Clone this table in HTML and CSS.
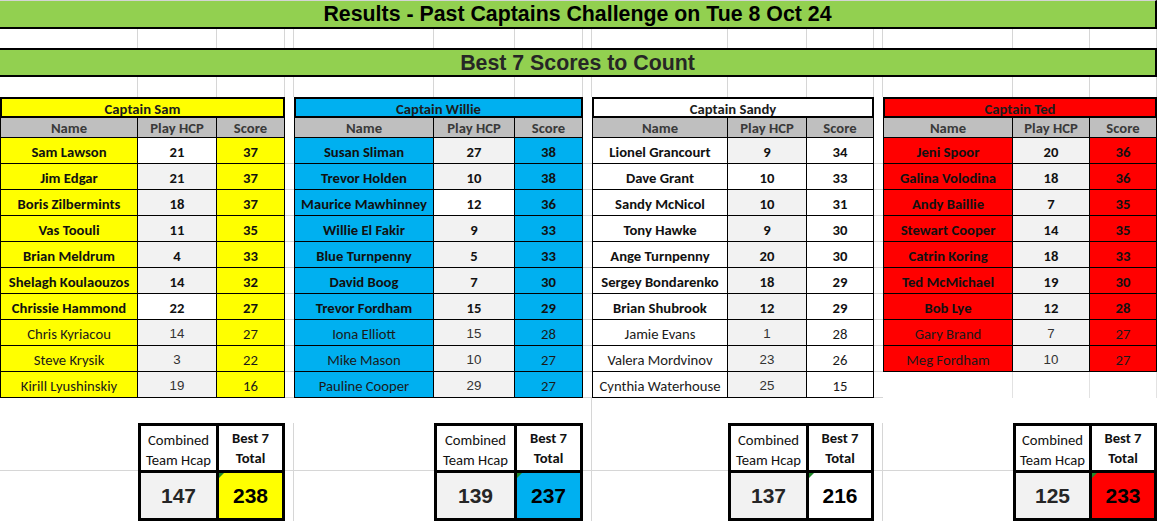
FILE: index.html
```html
<!DOCTYPE html>
<html lang="en">
<head>
<meta charset="utf-8">
<title>Results - Past Captains Challenge on Tue 8 Oct 24</title>
<link rel="stylesheet" href="styles.css">
</head>
<body>
<main class="sheet">
  <h1 class="banner banner--title">Results - Past Captains Challenge on Tue 8 Oct 24</h1>
  <span class="g"></span><span class="g"></span><span class="g"></span><span class="g"></span><span class="g"></span><span class="g"></span><span class="g"></span><span class="g"></span><span class="g"></span><span class="g"></span><span class="g"></span><span class="g"></span><span class="g"></span><span class="g"></span><span class="g"></span>
  <h2 class="banner banner--sub">Best 7 Scores to Count</h2>
  <span class="g"></span><span class="g"></span><span class="g"></span><span class="g"></span><span class="g"></span><span class="g"></span><span class="g"></span><span class="g"></span><span class="g"></span><span class="g"></span><span class="g"></span><span class="g"></span><span class="g"></span><span class="g"></span><span class="g"></span>

  <section class="team team--sam">
    <h3 class="team__captain">Captain Sam</h3>
    <div class="r r--head"><span class="n">Name</span><span class="h">Play HCP</span><span class="s">Score</span></div>
    <div class="r"><span class="n">Sam Lawson</span><span class="h h--w">21</span><span class="s">37</span></div>
    <div class="r"><span class="n">Jim Edgar</span><span class="h">21</span><span class="s">37</span></div>
    <div class="r"><span class="n">Boris Zilbermints</span><span class="h">18</span><span class="s">37</span></div>
    <div class="r"><span class="n">Vas Toouli</span><span class="h">11</span><span class="s">35</span></div>
    <div class="r"><span class="n">Brian Meldrum</span><span class="h">4</span><span class="s">33</span></div>
    <div class="r"><span class="n">Shelagh Koulaouzos</span><span class="h">14</span><span class="s">32</span></div>
    <div class="r"><span class="n">Chrissie Hammond</span><span class="h h--w">22</span><span class="s">27</span></div>
    <div class="r r--extra"><span class="n">Chris Kyriacou</span><span class="h">14</span><span class="s">27</span></div>
    <div class="r r--extra"><span class="n">Steve Krysik</span><span class="h">3</span><span class="s">22</span></div>
    <div class="r r--extra"><span class="n">Kirill Lyushinskiy</span><span class="h">19</span><span class="s">16</span></div>
  </section>
  <div class="gap"></div>

  <section class="team team--willie">
    <h3 class="team__captain">Captain Willie</h3>
    <div class="r r--head"><span class="n">Name</span><span class="h">Play HCP</span><span class="s">Score</span></div>
    <div class="r"><span class="n">Susan Sliman</span><span class="h">27</span><span class="s">38</span></div>
    <div class="r"><span class="n">Trevor Holden</span><span class="h">10</span><span class="s">38</span></div>
    <div class="r"><span class="n">Maurice Mawhinney</span><span class="h h--w">12</span><span class="s">36</span></div>
    <div class="r"><span class="n">Willie El Fakir</span><span class="h">9</span><span class="s">33</span></div>
    <div class="r"><span class="n">Blue Turnpenny</span><span class="h">5</span><span class="s">33</span></div>
    <div class="r"><span class="n">David Boog</span><span class="h">7</span><span class="s">30</span></div>
    <div class="r"><span class="n">Trevor Fordham</span><span class="h">15</span><span class="s">29</span></div>
    <div class="r r--extra"><span class="n">Iona Elliott</span><span class="h">15</span><span class="s">28</span></div>
    <div class="r r--extra"><span class="n">Mike Mason</span><span class="h">10</span><span class="s">27</span></div>
    <div class="r r--extra"><span class="n">Pauline Cooper</span><span class="h">29</span><span class="s">27</span></div>
  </section>
  <div class="gap"></div>

  <section class="team team--sandy">
    <h3 class="team__captain">Captain Sandy</h3>
    <div class="r r--head"><span class="n">Name</span><span class="h">Play HCP</span><span class="s">Score</span></div>
    <div class="r"><span class="n">Lionel Grancourt</span><span class="h">9</span><span class="s">34</span></div>
    <div class="r"><span class="n">Dave Grant</span><span class="h h--w">10</span><span class="s">33</span></div>
    <div class="r"><span class="n">Sandy McNicol</span><span class="h">10</span><span class="s">31</span></div>
    <div class="r"><span class="n">Tony Hawke</span><span class="h">9</span><span class="s">30</span></div>
    <div class="r"><span class="n">Ange Turnpenny</span><span class="h">20</span><span class="s">30</span></div>
    <div class="r"><span class="n">Sergey Bondarenko</span><span class="h">18</span><span class="s">29</span></div>
    <div class="r"><span class="n">Brian Shubrook</span><span class="h">12</span><span class="s">29</span></div>
    <div class="r r--extra"><span class="n">Jamie Evans</span><span class="h">1</span><span class="s">28</span></div>
    <div class="r r--extra"><span class="n">Valera Mordvinov</span><span class="h">23</span><span class="s">26</span></div>
    <div class="r r--extra"><span class="n">Cynthia Waterhouse</span><span class="h">25</span><span class="s">15</span></div>
  </section>
  <div class="gap"></div>

  <section class="team team--ted">
    <h3 class="team__captain">Captain Ted</h3>
    <div class="r r--head"><span class="n">Name</span><span class="h">Play HCP</span><span class="s">Score</span></div>
    <div class="r"><span class="n">Jeni Spoor</span><span class="h">20</span><span class="s">36</span></div>
    <div class="r"><span class="n">Galina Volodina</span><span class="h">18</span><span class="s">36</span></div>
    <div class="r"><span class="n">Andy Baillie</span><span class="h">7</span><span class="s">35</span></div>
    <div class="r"><span class="n">Stewart Cooper</span><span class="h">14</span><span class="s">35</span></div>
    <div class="r"><span class="n">Catrin Koring</span><span class="h">18</span><span class="s">33</span></div>
    <div class="r"><span class="n">Ted McMichael</span><span class="h">19</span><span class="s">30</span></div>
    <div class="r"><span class="n">Bob Lye</span><span class="h">12</span><span class="s">28</span></div>
    <div class="r r--extra"><span class="n">Gary Brand</span><span class="h">7</span><span class="s">27</span></div>
    <div class="r r--extra"><span class="n">Meg Fordham</span><span class="h">10</span><span class="s">27</span></div>
    <div class="r r--empty"><span></span><span></span><span></span></div>
  </section>

  <span class="spacer spacer--left"></span><span class="spacer"></span>

  <span class="b b--row1"></span>
  <div class="combo combo--sam">
    <span class="combo__label">Combined<br>Team Hcap</span>
    <span class="combo__label combo__label--best">Best 7<br>Total</span>
    <span class="combo__hcap">147</span>
    <span class="combo__total">238</span>
  </div>
  <span class="b b--row1 b--edge"></span>
  <span class="b b--row1"></span>
  <div class="combo combo--willie">
    <span class="combo__label">Combined<br>Team Hcap</span>
    <span class="combo__label combo__label--best">Best 7<br>Total</span>
    <span class="combo__hcap">139</span>
    <span class="combo__total">237</span>
  </div>
  <span class="b b--row1 b--edge"></span>
  <span class="b b--row1"></span>
  <div class="combo combo--sandy">
    <span class="combo__label">Combined<br>Team Hcap</span>
    <span class="combo__label combo__label--best">Best 7<br>Total</span>
    <span class="combo__hcap">137</span>
    <span class="combo__total">216</span>
  </div>
  <span class="b b--row1 b--edge"></span>
  <span class="b b--row1"></span>
  <div class="combo combo--ted">
    <span class="combo__label">Combined<br>Team Hcap</span>
    <span class="combo__label combo__label--best">Best 7<br>Total</span>
    <span class="combo__hcap">125</span>
    <span class="combo__total">233</span>
  </div>

  <span class="b"></span>
  <span class="b b--edge"></span>
  <span class="b"></span>
  <span class="b b--edge"></span>
  <span class="b"></span>
  <span class="b b--edge"></span>
  <span class="b"></span>
</main>
</body>
</html>
```

FILE: styles.css
```css
* {
  box-sizing: border-box;
  margin: 0;
  padding: 0;
}

body {
  background: #fff;
  font-family: Carlito, Calibri, Lato, "Liberation Sans", sans-serif;
  font-size: 14.67px;
  color: #111;
}

.sheet {
  display: grid;
  width: 1157px;
  grid-template-columns: 138px 79px 68px 9px 140px 81px 68px 9px 136px 79px 67px 9px 130px 77px 67px;
  grid-template-rows: 29px 19px 29px 20px 21px 20px repeat(10, 26px) 25px 48px 50px;
}

/* green banners */
.banner {
  grid-column: 1 / -1;
  display: flex;
  align-items: center;
  justify-content: center;
  background: #92d050;
  font-family: "Liberation Sans", Arial, sans-serif;
  font-weight: 700;
  font-size: 21.33px;
  border-right: 2px solid #000;
  border-bottom: 2px solid #000;
}

.banner--title {
  border-top: 1px solid #d4d4d4;
  padding-top: 1px;
  color: #000;
}

.banner--sub {
  border-top: 2px solid #000;
  padding-top: 2px;
  color: #262626;
}

/* plain gridline cells */
.g {
  border-right: 1px solid #d6d6d6;
}

.gap {
  grid-row: span 12;
  background-image: repeating-linear-gradient(to bottom, transparent 0 25px, #d6d6d6 25px 26px);
  background-position: 0 41px;
  background-size: 100% calc(100% - 41px);
  background-repeat: no-repeat;
}

/* team tables */
.team {
  grid-column: span 3;
  grid-row: span 12;
  display: grid;
  grid-template-rows: 21px 20px repeat(10, 26px);
}

.team--sam { grid-template-columns: 138px 79px 68px; --team: #ffff00; }
.team--willie { grid-template-columns: 140px 81px 68px; --team: #00b0f0; }
.team--sandy { grid-template-columns: 136px 79px 67px; --team: #ffffff; }
.team--ted { grid-template-columns: 130px 77px 67px; --team: #ff0000; }

.team__captain {
  grid-column: 1 / -1;
  display: flex;
  align-items: center;
  justify-content: center;
  padding-top: 2px;
  background: var(--team);
  border: 2px solid #000;
  font-size: 14.67px;
  font-weight: 700;
  color: #1c1c1c;
}

.r {
  display: contents;
}

.r > span {
  display: flex;
  align-items: center;
  justify-content: center;
  padding-top: 2px;
  white-space: nowrap;
  border-right: 1px solid #000;
  border-bottom: 1px solid #000;
  font-weight: 700;
  color: #111;
}

.r > .n {
  border-left: 1px solid #000;
  background: var(--team);
}

.r > .h {
  background: #f2f2f2;
}

.r > .h--w {
  background: #fff;
}

.r > .s {
  background: var(--team);
}

.r--head > span,
.r--head > .n,
.r--head > .h,
.r--head > .s {
  padding-top: 0;
  background: #bfbfbf;
  color: #3a3a3a;
}

.r--extra > span {
  font-weight: 400;
  color: #1a1a1a;
}

.r--extra > .h {
  font-family: "Liberation Sans", Arial, sans-serif;
  font-size: 13.33px;
  color: #333;
}

.r--empty > span,
.r--empty > .n {
  border-left: 0;
  border-right: 1px solid #e2e2e2;
  border-bottom: 0;
  background: none;
}

/* bottom area */
.spacer {
  grid-column: span 7;
}

.spacer--left {
  grid-column: span 8;
  border-right: 1px solid #d6d6d6;
}

.b--row1 {
  border-bottom: 1px solid #d6d6d6;
}

.b--edge {
  border-right: 1px solid #d6d6d6;
}

.combo {
  grid-column: span 2;
  grid-row: span 2;
  display: grid;
  grid-template-rows: 47px 1fr;
  border: 3px solid #000;
}

.combo--sam { grid-template-columns: 78px 1fr; --team: #ffff00; }
.combo--willie { grid-template-columns: 80px 1fr; --team: #00b0f0; }
.combo--sandy { grid-template-columns: 78px 1fr; --team: #ffffff; }
.combo--ted { grid-template-columns: 76px 1fr; --team: #ff0000; }

.combo > span {
  display: flex;
  align-items: center;
  justify-content: center;
  text-align: center;
}

.combo__label {
  border-bottom: 3px solid #000;
  line-height: 20px;
  padding-top: 3px;
  color: #111;
}

.combo__label:first-child {
  border-right: 3px solid #000;
}

.combo__label--best {
  font-weight: 700;
  padding-bottom: 1px;
  padding-top: 0;
}

.combo__hcap,
.combo__total {
  font-family: "Liberation Sans", Arial, sans-serif;
  font-size: 21px;
  font-weight: 700;
}

.combo__hcap {
  border-right: 3px solid #000;
  background: #f2f2f2;
  color: #262626;
}

.combo__total {
  position: relative;
  background: var(--team);
  color: #000;
}

.combo__total::before {
  content: "";
  position: absolute;
  top: 0;
  left: 0;
  border-top: 5px solid #1f8a2a;
  border-right: 5px solid transparent;
}
```
